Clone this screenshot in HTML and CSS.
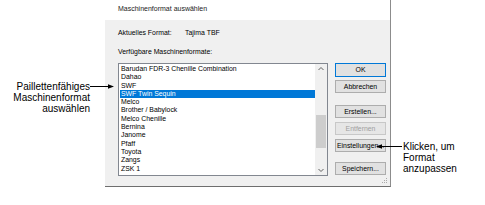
FILE: index.html
```html
<!DOCTYPE html>
<html>
<head>
<meta charset="utf-8">
<link rel="stylesheet" href="styles.css">
</head>
<body>
<div class="stage">
  <div class="note note-left">
    <span>Paillettenfähiges</span>
    <span>Maschinenformat</span>
    <span>auswählen</span>
  </div>
  <div class="dialog">
    <div class="titlebar">Maschinenformat auswählen</div>
    <div class="body">
      <div class="current"><span class="lbl">Aktuelles Format:</span><span>Tajima TBF</span></div>
      <div class="avail">Verfügbare Maschinenformate:</div>
      <div class="main">
        <div class="listbox">
          <ul class="items">
            <li>Barudan FDR-3 Chenille Combination</li>
            <li>Dahao</li>
            <li>SWF</li>
            <li class="sel">SWF Twin Sequin</li>
            <li>Melco</li>
            <li>Brother / Babylock</li>
            <li>Melco Chenille</li>
            <li>Bernina</li>
            <li>Janome</li>
            <li>Pfaff</li>
            <li>Toyota</li>
            <li>Zangs</li>
            <li>ZSK 1</li>
          </ul>
          <div class="scrollbar">
            <svg class="arrow" width="12" height="10" viewBox="0 0 12 10"><path d="M3.5 6 L6 3.5 L8.5 6" fill="none" stroke="#606060" stroke-width="1"/></svg>
            <div class="track"><div class="thumb"></div></div>
            <svg class="arrow" width="12" height="10" viewBox="0 0 12 10"><path d="M3.5 4 L6 6.5 L8.5 4" fill="none" stroke="#606060" stroke-width="1"/></svg>
          </div>
        </div>
        <div class="buttons">
          <div class="btn default">OK</div>
          <div class="btn">Abbrechen</div>
          <div class="btn g1">Erstellen...</div>
          <div class="btn disabled">Entfernen</div>
          <div class="btn">Einstellungen...</div>
          <div class="btn g2">Speichern...</div>
        </div>
      </div>
      <svg class="grip" width="8" height="8" viewBox="0 0 8 8">
        <rect x="6" y="2" width="1" height="1" fill="#aaa"/>
        <rect x="4" y="4" width="1" height="1" fill="#aaa"/>
        <rect x="6" y="4" width="1" height="1" fill="#aaa"/>
        <rect x="2" y="6" width="1" height="1" fill="#aaa"/>
        <rect x="4" y="6" width="1" height="1" fill="#aaa"/>
        <rect x="6" y="6" width="1" height="1" fill="#aaa"/>
      </svg>
    </div>
  </div>
  <div class="note note-right">
    <span>Klicken, um</span>
    <span>Format</span>
    <span>anzupassen</span>
  </div>
  <svg class="leader leader-left" width="24" height="7" viewBox="0 0 24 7">
    <line x1="0" y1="3.5" x2="20" y2="3.5" stroke="#000" stroke-width="1"/>
    <path d="M24 3.5 L18 1.2 L18 5.8 Z" fill="#000"/>
  </svg>
  <svg class="leader leader-right" width="26" height="7" viewBox="0 0 26 7">
    <line x1="4" y1="3.5" x2="26" y2="3.5" stroke="#000" stroke-width="1"/>
    <path d="M0 3.5 L6 1.2 L6 5.8 Z" fill="#000"/>
  </svg>
</div>
</body>
</html>
```
FILE: styles.css
```css
* { box-sizing: border-box; margin: 0; padding: 0; }
html, body { width: 485px; height: 205px; background: #fff; overflow: hidden; }
body { font-family: "Liberation Sans", Arial, sans-serif; color: #000; }

.stage { position: relative; display: flex; width: 485px; height: 205px; }

.note { display: flex; flex-direction: column; font-family: "Liberation Sans", Arial, sans-serif; font-size: 10px; line-height: 11px; color: #000; }
.note-left { width: 90px; align-items: flex-end; padding-top: 81px; margin-right: 15px; }
.note-right { padding-top: 141px; margin-left: 12px; }

.dialog { width: 286px; height: 187px; display: flex; flex-direction: column; border-right: 1px solid #8c8c8c; border-bottom: 1px solid #6e6e6e; font-size: 6.9px; color: #000; }
.titlebar { height: 20px; background: #fff; padding-left: 13px; line-height: 18px; font-size: 7px; color: #1a1a1a; }
.body { position: relative; flex: 1; background: #f0f0f0; padding: 8px 0 0 13px; }
.current { height: 10px; line-height: 10px; display: flex; }
.current .lbl { width: 67px; }
.avail { margin-top: 9px; height: 10px; line-height: 10px; }
.main { display: flex; margin-top: 6px; }

.listbox { width: 210px; height: 113px; background: #fff; border: 1px solid #828790; display: flex; }
.items { list-style: none; flex: 1; padding: 1px 0 0 1px; }
.items li { height: 8.3px; line-height: 8.3px; padding-left: 1px; white-space: nowrap; }
.items li.sel { background: #0078d7; color: #fff; }

.scrollbar { width: 12px; background: #f0f0f0; display: flex; flex-direction: column; }
.scrollbar .arrow { width: 12px; height: 10px; display: block; }
.track { flex: 1; display: flex; flex-direction: column; padding-top: 41px; }
.thumb { width: 10px; margin-left: 1px; height: 33px; background: #cdcdcd; }

.buttons { display: flex; flex-direction: column; margin-left: 7px; width: 51px; }
.btn { height: 13px; line-height: 11px; text-align: center; background: #e1e1e1; border: 1px solid #adadad; margin-bottom: 4px; white-space: nowrap; }
.btn.default { border: 1px solid #0078d7; height: 14px; line-height: 12px; margin-bottom: 3px; }
.btn.g1 { margin-top: 8px; }
.btn.g2 { margin-top: 6px; }
.btn.disabled { background: #e6e6e6; border-color: #c8c8c8; color: #a0a0a0; }

.grip { position: absolute; right: 2px; bottom: 2px; }

.leader { position: absolute; }
.leader-left { left: 90px; top: 83px; }
.leader-right { left: 376px; top: 143px; }
```
